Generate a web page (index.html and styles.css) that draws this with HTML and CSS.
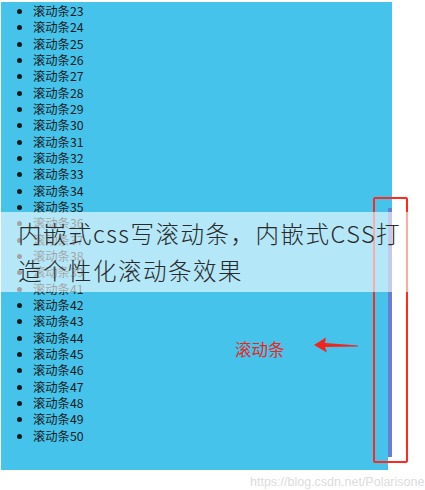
FILE: index.html
```html
<!DOCTYPE html>
<html lang="zh">
<head>
<meta charset="utf-8">
<title>内嵌式css写滚动条</title>
<link rel="stylesheet" href="styles.css">
</head>
<body>
<div class="stage">
  <div class="scroller">
    <ul class="list">
      <li>滚动条23</li><li>滚动条24</li><li>滚动条25</li><li>滚动条26</li>
      <li>滚动条27</li><li>滚动条28</li><li>滚动条29</li><li>滚动条30</li>
      <li>滚动条31</li><li>滚动条32</li><li>滚动条33</li><li>滚动条34</li>
      <li>滚动条35</li><li>滚动条36</li><li>滚动条37</li><li>滚动条38</li>
      <li>滚动条39</li><li>滚动条41</li><li>滚动条42</li><li>滚动条43</li>
      <li>滚动条44</li><li>滚动条45</li><li>滚动条46</li><li>滚动条47</li>
      <li>滚动条48</li><li>滚动条49</li><li>滚动条50</li>
    </ul>
    <div class="track">
      <div class="track-top"></div>
      <div class="thumb"></div>
      <div class="track-end"></div>
    </div>
  </div>
  <div class="highlight"></div>
  <span class="label">滚动条</span>
  <svg class="arrow" width="50" height="20" viewBox="0 0 50 20">
    <polygon points="0,9 12,1.5 11,7 44,9.5 44,10.5 11,11 13,16.5" fill="#f0261c"/>
  </svg>
  <div class="banner">内嵌式css写滚动条，内嵌式CSS打造个性化滚动条效果</div>
  <div class="watermark">https://blog.csdn.net/Polarisone</div>
</div>
</body>
</html>
```
FILE: styles.css
```css
html, body {
  margin: 0;
  padding: 0;
  background: #ffffff;
}
.stage {
  position: relative;
  width: 425px;
  height: 490px;
  overflow: hidden;
  font-family: "Noto Sans CJK SC", "Noto Sans", sans-serif;
}
.scroller {
  margin: 2px 0 0 1px;
  width: 391px;
  height: 468px;
  display: flex;
}
.list {
  flex: 1;
  margin: 0;
  padding: 1px 0 0 32px;
  background: #45c3eb;
  list-style: disc;
  font-size: 12.3px;
  line-height: 16.33px;
  color: #1b1b1b;
}
.track {
  width: 4px;
  display: flex;
  flex-direction: column;
}
.track-top {
  height: 206px;
  background: #45c3eb;
}
.thumb {
  height: 249px;
  background: #6a7dd3;
}
.track-end {
  flex: 1;
  background: #ffffff;
}
.highlight {
  position: absolute;
  left: 373px;
  top: 197px;
  width: 31px;
  height: 262px;
  border: 2px solid #ff2a1f;
  border-radius: 2px;
}
.label {
  position: absolute;
  left: 235px;
  top: 338px;
  font-size: 16.5px;
  line-height: 22px;
  color: #e8281e;
}
.arrow {
  position: absolute;
  left: 314px;
  top: 336px;
}
.banner {
  position: absolute;
  left: 0;
  top: 212px;
  width: 425px;
  height: 80px;
  box-sizing: border-box;
  padding: 3px 17px 0 18px;
  background: rgba(255, 255, 255, 0.6);
  font-size: 23.5px;
  font-weight: 300;
  letter-spacing: 1.5px;
  line-height: 37px;
  color: #2a2a2a;
}
.watermark {
  position: absolute;
  left: 250px;
  top: 475px;
  font-family: "Liberation Sans", Arial, sans-serif;
  font-size: 12.5px;
  color: #dcdcdc;
}
```
